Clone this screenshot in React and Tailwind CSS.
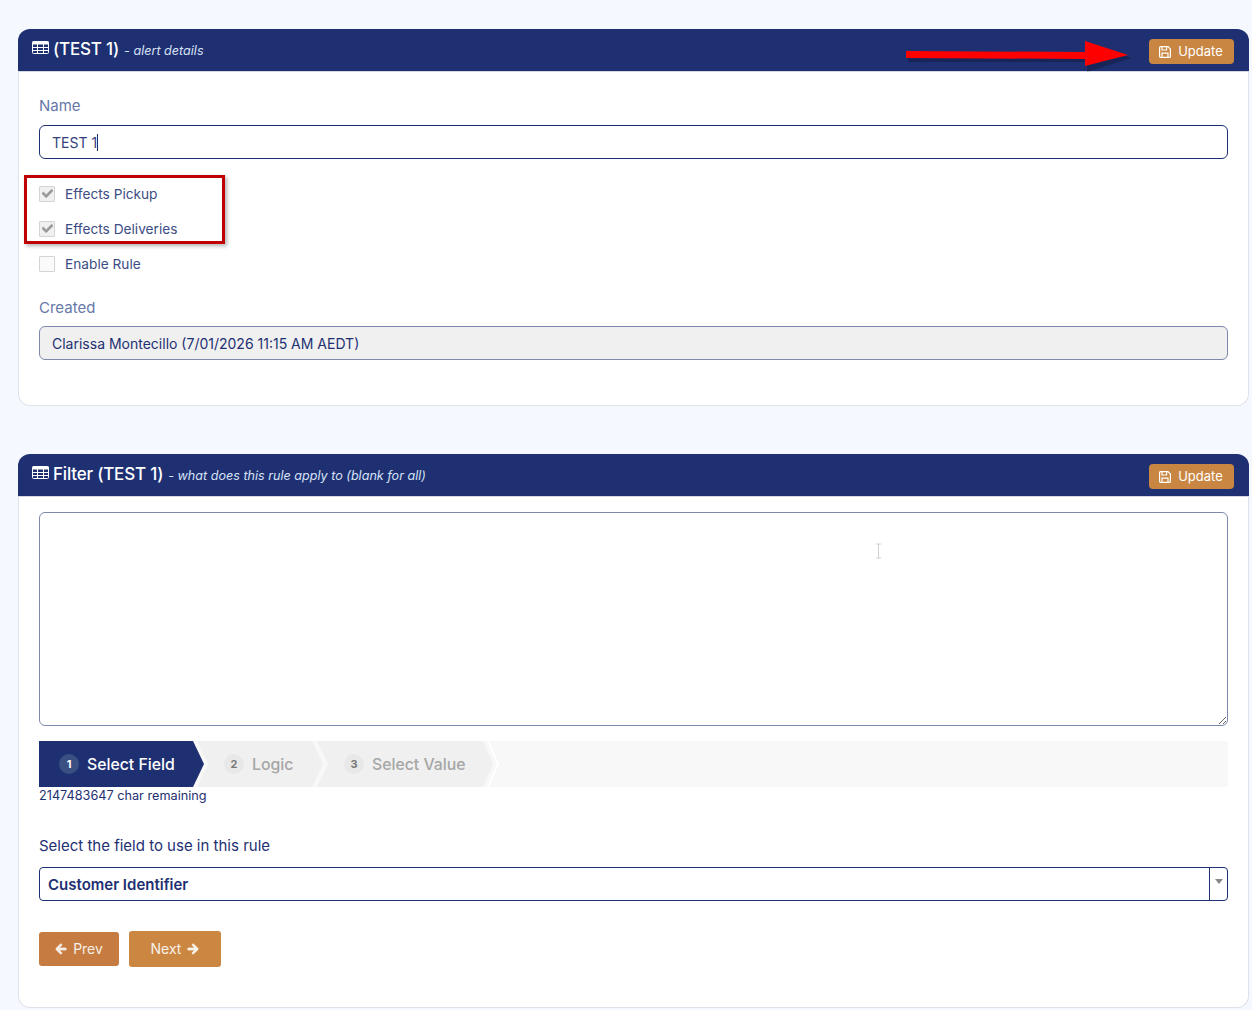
import React from 'react'
import { FaArrowLeft, FaArrowRight, FaCheck } from 'react-icons/fa'

function TableIcon() {
  return (
    <svg className="mr-[4px] mb-[5px] shrink-0" width="17" height="13" viewBox="0 0 17 13" fill="none">
      <rect x="0.5" y="0.5" width="16" height="12" rx="1" stroke="#ffffff" />
      <rect x="0.5" y="0.5" width="16" height="3" fill="#ffffff" />
      <path d="M0.5 6.5H16.5M0.5 9.5H16.5M5.5 3V13M11.5 3V13" stroke="#ffffff" />
    </svg>
  )
}

function SaveIcon() {
  return (
    <svg width="12" height="12" viewBox="0 0 12 12" fill="none" stroke="#ffffff" strokeWidth="1.2">
      <path d="M1.6 0.6H9L11.4 3V10.4A1 1 0 0 1 10.4 11.4H1.6A1 1 0 0 1 0.6 10.4V1.6A1 1 0 0 1 1.6 0.6Z" />
      <path d="M3 1V4H7.6V1M3 11V7.2H9V11" />
    </svg>
  )
}

function UpdateButton() {
  return (
    <button className="mt-[3px] flex items-center h-[25px] w-[85px] justify-center gap-[7px] rounded-[4px] bg-[#c98642] pr-px text-[13px] text-white">
      <SaveIcon />
      Update
    </button>
  )
}

function CardHeader({ title, note }) {
  return (
    <div className="-mx-px flex items-center justify-between h-[43px] rounded-t-[12px] bg-[#1e3072] pl-[14px] pr-[15px] border-b border-[#d5d8e0]">
      <div className="flex items-center text-white">
        <TableIcon />
        <span className="text-[17px] font-medium tracking-[-0.2px]">{title}</span>
        <span className="ml-[5px] mt-[2px] text-[12.6px] italic text-[#d8e2f6]">- {note}</span>
      </div>
      <UpdateButton />
    </div>
  )
}

function CheckRow({ label, checked }) {
  return (
    <div className="flex items-center h-[35px]">
      <span className={`flex items-center justify-center w-[16px] h-[16px] border border-[#d4d4d4] rounded-[1px] ${checked ? 'bg-[#f0f0f0]' : 'bg-[#fafafa]'}`}>
        {checked && <FaCheck className="text-[11px] text-[#9a9a9a]" stroke="currentColor" strokeWidth={30} />}
      </span>
      <span className="ml-[10px] mt-[2px] text-[13.7px] text-[#3d4d85]">{label}</span>
    </div>
  )
}

function Step({ num, label, active, className }) {
  return (
    <div className={`flex items-center h-[46px] ${className} ${active ? 'bg-[#1e3072] text-white' : 'bg-[#f0f0f0] text-[#a6a6a6]'}`}>
      <span className={`flex items-center justify-center w-[20px] h-[20px] rounded-full text-[11px] font-bold ${active ? 'bg-[#3b5082] text-white' : 'bg-[#e8e8e8] text-[#777777]'}`}>
        {num}
      </span>
      <span className="ml-[8px] mt-[2px] text-[15.8px] font-medium">{label}</span>
    </div>
  )
}

export default function App() {
  return (
    <div className="relative min-h-[1010px] h-[1010px] overflow-hidden bg-[#f5f8fe] pt-[29px] pl-[18px] pr-[3px] font-['Inter',sans-serif] text-[#1e3072]">
      {/* Alert details */}
      <div className="rounded-[12px] bg-white border border-[#dfe2e8] border-t-0 h-[377px]">
        <CardHeader title="(TEST 1)" note="alert details" />
        <div className="px-[20px]">
          <div className="mt-[25px] text-[15px] leading-[18px] text-[#6678a8]">Name</div>
          <div className="mt-[10px] flex items-center h-[34px] rounded-[6px] border border-[#1e3072] pl-[12px] text-[14px] text-[#33427c]">
            TEST 1<span className="w-px h-[17px] bg-[#1e3072]"></span>
          </div>
          <div className="mt-[17px]">
            <CheckRow label="Effects Pickup" checked />
            <CheckRow label="Effects Deliveries" checked />
            <CheckRow label="Enable Rule" />
          </div>
          <div className="mt-[18px] text-[15px] leading-[18px] text-[#6678a8]">Created</div>
          <div className="mt-[9px] flex items-center h-[34px] rounded-[6px] border border-[#7d88ad] bg-[#f0f0f0] pl-[12px] text-[14px] text-[#1e3072]">
            Clarissa Montecillo (7/01/2026 11:15 AM AEDT)
          </div>
        </div>
      </div>

      {/* Filter */}
      <div className="mt-[48px] rounded-[12px] bg-white border border-[#dfe2e8] border-t-0 h-[554px]">
        <CardHeader title="Filter (TEST 1)" note="what does this rule apply to (blank for all)" />
        <div className="px-[20px]">
          <textarea readOnly className="block mt-[15px] w-full h-[214px] rounded-[6px] border border-[#7d88ad] outline-none"></textarea>
          <div className="mt-[15px] flex h-[46px] bg-[#f8f8f8]">
            <Step num="1" label="Select Field" active className="w-[165px] pl-[20px] [clip-path:polygon(0_0,154px_0,100%_50%,154px_100%,0_100%)]" />
            <Step num="2" label="Logic" className="-ml-[7px] w-[126px] pl-[27px] [clip-path:polygon(0_0,115px_0,100%_50%,115px_100%,0_100%,11px_50%)]" />
            <Step num="3" label="Select Value" className="-ml-[6px] w-[176px] pl-[27px] [clip-path:polygon(0_0,166px_0,100%_50%,166px_100%,0_100%,11px_50%)]" />
            <div className="-ml-[6px] w-[12px] h-[46px] bg-white [clip-path:polygon(0_0,2px_0,100%_50%,2px_100%,0_100%,10px_50%)]"></div>
          </div>
          <div className="mt-px text-[12.7px] leading-[16px] text-[#1e3072]">2147483647 char remaining</div>
          <div className="mt-[33px] text-[15px] leading-[18px] text-[#1e3072]">Select the field to use in this rule</div>
          <div className="mt-[12px] flex items-center h-[34px] rounded-[4px] border border-[#1e3072]">
            <span className="flex-1 pl-[8px] pt-[2px] text-[15px] font-semibold text-[#1e3072]">Customer Identifier</span>
            <span className="flex items-center justify-center w-[18px] h-full border-l border-[#1e3072] pb-[5px]">
              <span className="w-0 h-0 border-x-[4px] border-x-transparent border-t-[5px] border-t-[#888888]"></span>
            </span>
          </div>
          <div className="mt-[30px] flex items-center gap-[10px]">
            <button className="flex items-center justify-center gap-[6px] w-[80px] h-[34px] rounded-[3px] bg-[#c67c40] pb-[2px] text-[14px] text-[#f5eee6]">
              <FaArrowLeft className="text-[12px] mt-[2px]" stroke="currentColor" strokeWidth={40} />
              Prev
            </button>
            <button className="flex items-center justify-center gap-[6px] w-[92px] h-[36px] rounded-[3px] bg-[#cb8642] pb-[2px] text-[14px] text-[#f8f2ea]">
              Next
              <FaArrowRight className="text-[12px] mt-[2px]" stroke="currentColor" strokeWidth={40} />
            </button>
          </div>
        </div>
      </div>

      {/* annotations drawn over the screenshot */}
      <div className="absolute left-[24px] top-[175px] w-[201px] h-[69px] border-[3px] border-[#c00000] shadow-[2px_2px_4px_rgba(0,0,0,0.3)]"></div>
      <svg className="absolute left-[900px] top-[36px]" width="240" height="40" viewBox="0 0 240 40">
        <path d="M6 16 L185 16 L185 5 L230 19 L185 33 L185 23 L6 23 Z" fill="#000000" opacity="0.22" transform="translate(2 3)" />
        <path d="M6 15 L185 16 L185 5 L228 19 L185 30 L185 23 L6 22 Z" fill="#ff0000" />
      </svg>
      <svg className="absolute left-[875px] top-[543px]" width="7" height="16" viewBox="0 0 7 16">
        <path d="M1 1 H6 M3.5 1 V15 M1 15 H6" stroke="#d0d0d0" strokeWidth="1" fill="none" />
      </svg>
    </div>
  )
}
